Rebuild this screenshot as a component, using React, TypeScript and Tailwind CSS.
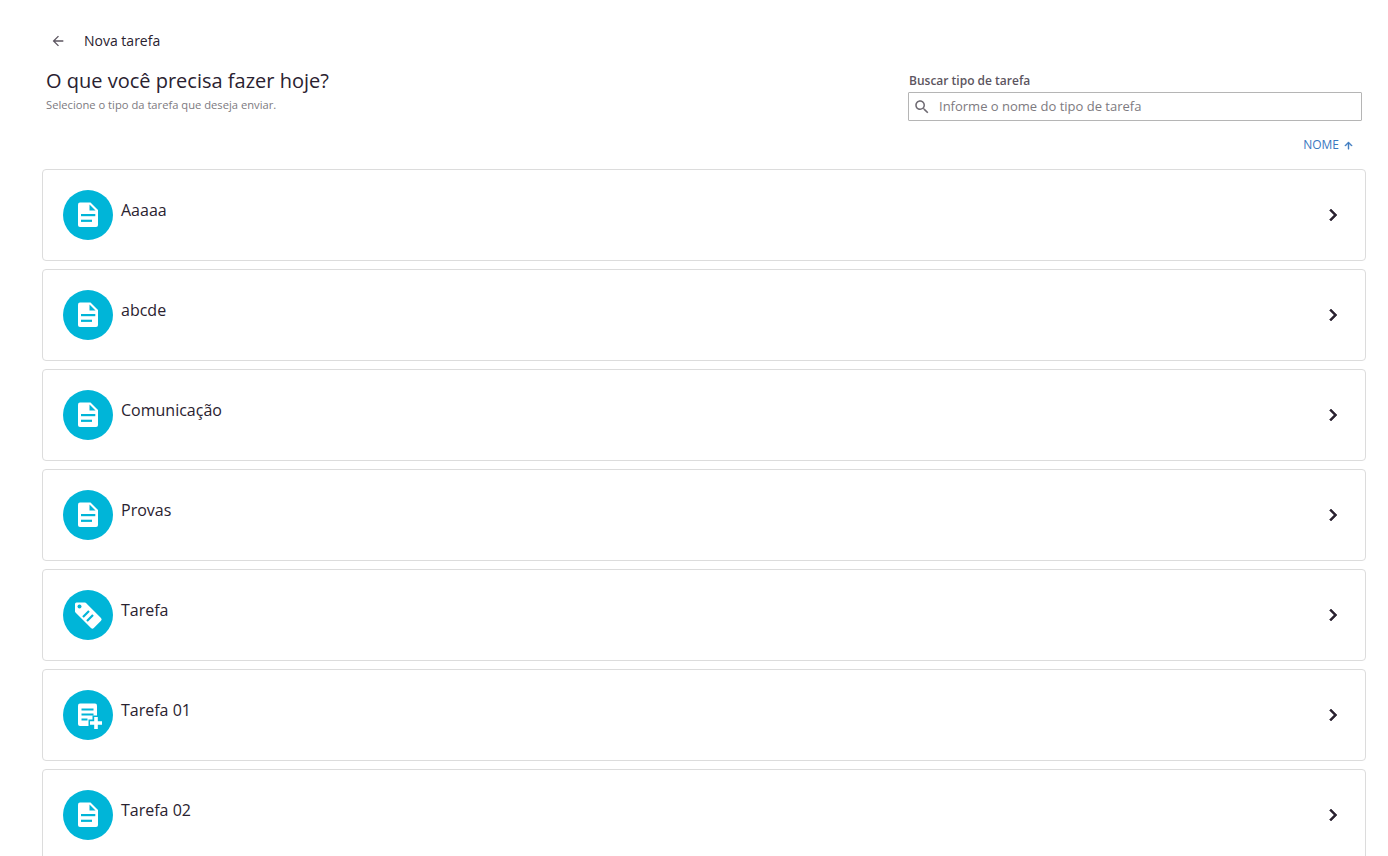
type IconKind = 'doc' | 'tag' | 'add';

const CYAN = '#00b5d8';

const TASK_TYPES: { name: string; icon: IconKind }[] = [
  { name: 'Aaaaa', icon: 'doc' },
  { name: 'abcde', icon: 'doc' },
  { name: 'Comunicação', icon: 'doc' },
  { name: 'Provas', icon: 'doc' },
  { name: 'Tarefa', icon: 'tag' },
  { name: 'Tarefa 01', icon: 'add' },
  { name: 'Tarefa 02', icon: 'doc' },
];

function TaskIcon({ kind }: { kind: IconKind }) {
  if (kind === 'tag') {
    return (
      <svg viewBox="0 0 30 30" className="w-[30px] h-[30px]">
        <path fill="#fff" d="M3.5 2.5H12a1.5 1.5 0 0 1 1 .5L28 18a2 2 0 0 1 0 2.8L20.8 28a2 2 0 0 1-2.8 0L2.5 12.5a1.5 1.5 0 0 1-.5-1V4a1.5 1.5 0 0 1 1.5-1.5z" />
        <circle cx="6.5" cy="6.5" r="2" fill={CYAN} />
        <path stroke={CYAN} strokeWidth="2.2" d="M10 17l6-6M14 21l6-6" />
      </svg>
    );
  }
  if (kind === 'add') {
    return (
      <svg viewBox="0 0 30 30" className="w-[30px] h-[30px]">
        <path fill="#fff" d="M7 3.5h15a2 2 0 0 1 2 2V24a2 2 0 0 1-2 2H7a2 2 0 0 1-2-2V5.5a2 2 0 0 1 2-2z" />
        <rect x="8.5" y="8.5" width="12" height="2" fill={CYAN} />
        <rect x="8.5" y="13.5" width="12" height="2" fill={CYAN} />
        <rect x="8.5" y="18.5" width="6" height="2" fill={CYAN} />
        <path fill={CYAN} stroke={CYAN} strokeWidth="3" d="M21 17h4v4h4v4h-4v4h-4v-4h-4v-4h4z" />
        <path fill="#fff" d="M21.2 17h3.6v4.2H29v3.6h-4.2V29h-3.6v-4.2H17v-3.6h4.2z" />
      </svg>
    );
  }
  return (
    <svg viewBox="0 0 30 30" className="w-[30px] h-[30px]">
      <path fill="#fff" d="M7 2.5h10.5L25 10v15a2 2 0 0 1-2 2H7a2 2 0 0 1-2-2V4.5a2 2 0 0 1 2-2z" />
      <path fill={CYAN} d="M16.5 4.5l6 6h-6z" />
      <rect x="8" y="14" width="14.3" height="2.2" fill={CYAN} />
      <rect x="8" y="19.7" width="11" height="2.2" fill={CYAN} />
    </svg>
  );
}

export default function App() {
  return (
    <div className="h-screen overflow-hidden bg-white pl-[42px] pr-[22px] text-[#2a2230] font-['Open_Sans',sans-serif]">
      {/* Header */}
      <div className="flex items-center h-[20px] mt-[31px] pl-[8px]">
        <svg viewBox="0 0 24 24" className="w-[16px] h-[16px]" fill="#5c5560">
          <path d="M20 11H7.83l5.59-5.59L12 4l-8 8 8 8 1.41-1.41L7.83 13H20v-2z" />
        </svg>
        <span className="ml-[18px] text-[14px] leading-[20px]">Nova tarefa</span>
      </div>

      <div className="flex justify-between items-start mt-[9px] pr-[4px]">
        <div className="pl-[4px]">
          <h1 className="text-[20px] leading-[42px] h-[42px]">O que você precisa fazer hoje?</h1>
          <p className="text-[11.2px] leading-[14px] -mt-[4px] text-[#7d7a80]">Selecione o tipo da tarefa que deseja enviar.</p>
        </div>
        <div className="w-[454px] mt-[13px]">
          <label className="block pl-[1px] text-[12px] leading-[16px] font-semibold text-[#5c5560]">Buscar tipo de tarefa</label>
          <div className="flex items-center h-[29px] mt-[3px] border border-[#b5b5b5] rounded-[1px] pl-[4px]">
            <svg viewBox="0 0 24 24" className="w-[18px] h-[18px]" fill="#6e6a72">
              <path d="M15.5 14h-.79l-.28-.27C15.41 12.59 16 11.11 16 9.5 16 5.91 13.09 3 9.5 3S3 5.91 3 9.5 5.91 16 9.5 16c1.61 0 3.09-.59 4.23-1.57l.27.28v.79l5 4.99L20.49 19l-4.99-5zm-6 0C7.01 14 5 11.99 5 9.5S7.01 5 9.5 5 14 7.01 14 9.5 11.99 14 9.5 14z" />
            </svg>
            <span className="ml-[8px] text-[13px] text-[#7d7a80]">Informe o nome do tipo de tarefa</span>
          </div>
        </div>
      </div>

      <div className="flex justify-end items-center h-[16px] mt-[16px] pr-[12px] text-[12px] text-[#3a78bf]">
        <span>NOME</span>
        <svg viewBox="0 0 24 24" className="w-[11px] h-[11px] ml-[4px]" fill="#3a78bf" stroke="#3a78bf" strokeWidth="1">
          <path d="M4 12l1.41 1.41L11 7.83V20h2V7.83l5.58 5.59L20 12l-8-8-8 8z" />
        </svg>
      </div>

      {/* Task types */}
      <div className="flex flex-col gap-2 mt-[16px]">
        {TASK_TYPES.map((t) => (
          <div key={t.name} className="flex items-center shrink-0 h-[92px] border border-[#dcdcdc] rounded-[4px] pl-[20px] pr-[20px]">
            <div className="flex items-center justify-center w-[50px] h-[50px] rounded-full bg-[#00b5d8]">
              <TaskIcon kind={t.icon} />
            </div>
            <span className="ml-[8px] -mt-[10px] text-[16px] leading-[22px] flex-1">{t.name}</span>
            <svg viewBox="0 0 24 24" className="w-[24px] h-[24px]" fill="#2a2230" stroke="#2a2230" strokeWidth="0.6">
              <path d="M10 6L8.59 7.41 13.17 12l-4.58 4.59L10 18l6-6z" />
            </svg>
          </div>
        ))}
      </div>
    </div>
  );
}
